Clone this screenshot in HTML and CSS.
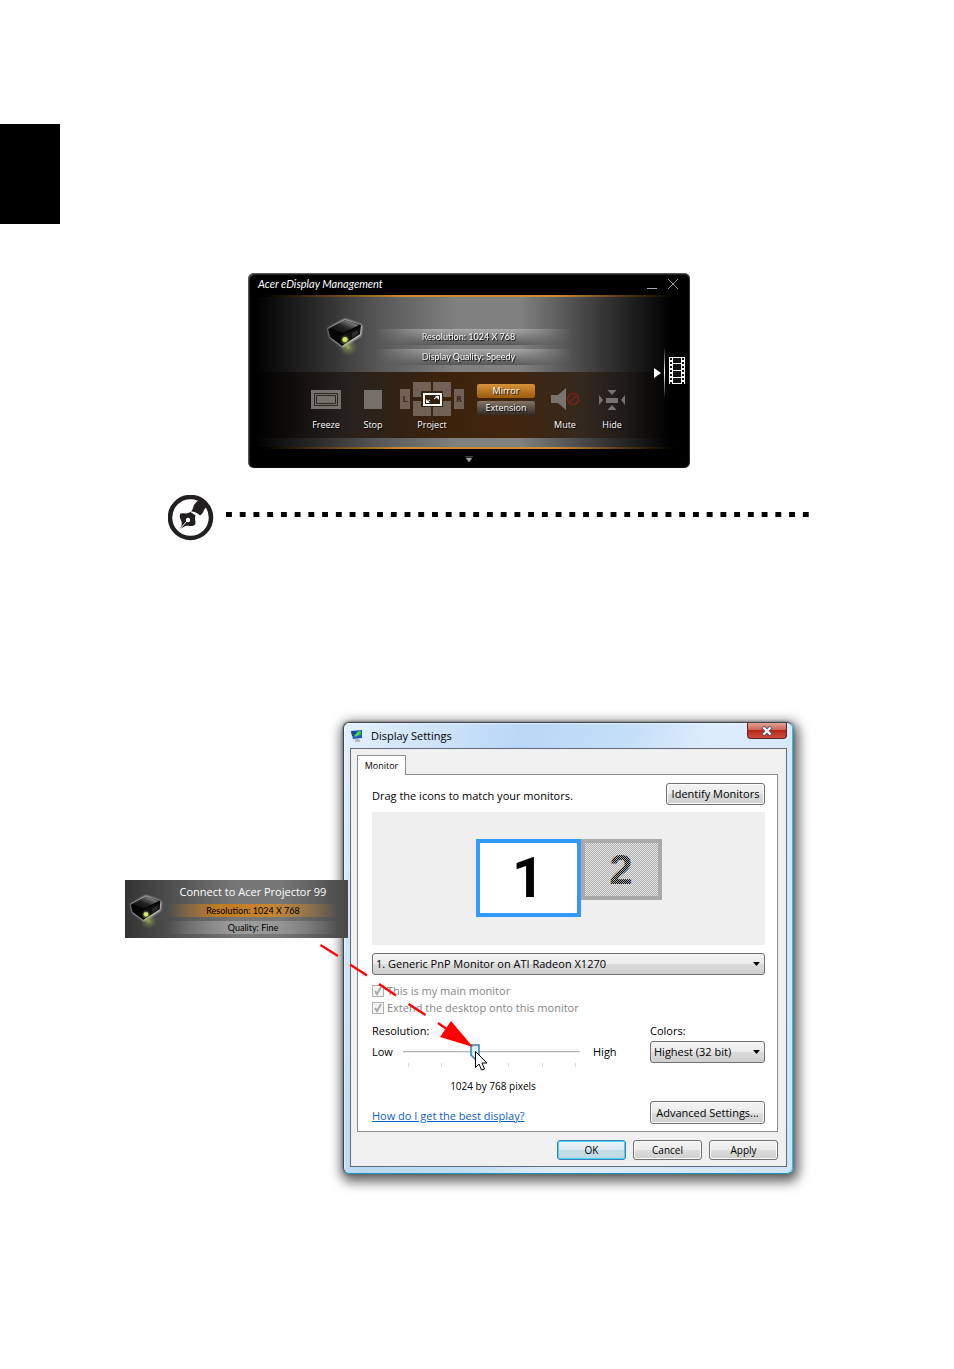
FILE: index.html
```
<!DOCTYPE html>
<html lang="en">
<head>
<meta charset="utf-8">
<title>Acer eDisplay Management</title>
<link rel="stylesheet" href="styles.css">
</head>
<body>
<svg class="defs" aria-hidden="true">
  <defs>
    <linearGradient id="lid" x1="0" y1="1" x2="1" y2="0"><stop offset="0" stop-color="#0a0a0a"/><stop offset=".45" stop-color="#222"/><stop offset="1" stop-color="#b5b5b5"/></linearGradient>
    <radialGradient id="beam"><stop offset="0" stop-color="#d8f070" stop-opacity=".95"/><stop offset=".4" stop-color="#a4c050" stop-opacity=".6"/><stop offset="1" stop-color="#a0b060" stop-opacity="0"/></radialGradient>
    <filter id="halo" x="-30%" y="-30%" width="160%" height="160%"><feGaussianBlur stdDeviation="1.3"/></filter>
  </defs>
  <symbol id="projector" viewBox="0 0 40 42">
    <path d="M4 14 20 5 36 11 35 20 18 31 6 22Z" fill="#fff" stroke="#fff" stroke-width="2" filter="url(#halo)" opacity=".85"/>
    <ellipse cx="23" cy="32" rx="9" ry="9" fill="url(#beam)" opacity=".6"/>
    <path d="M3 14 20 5 36 10 35 19 17 31 5 22Z" fill="#050505"/>
    <path d="M5 13 20 5 34 10 18 18Z" fill="url(#lid)"/>
    <path d="M17 20 35 12 35 19 17 30Z" fill="#111"/>
    <path d="M27 18l6-3v4l-6 4z" fill="#2c2c2c"/>
    <circle cx="20" cy="25" r="5" fill="url(#beam)"/>
    <circle cx="20" cy="24.500" r="2.500" fill="#d3e86a"/>
  </symbol>
</svg>

<div class="thumb-tab"></div>

<section class="manager" aria-label="Acer eDisplay Management">
  <header class="manager-title">
    <h1>Acer eDisplay Management</h1>
    <button class="win-btn" aria-label="Minimize"><svg width="12" height="12" viewBox="0 0 12 12"><path d="M1 10.500h10" stroke="#aaa"/></svg></button>
    <button class="win-btn" aria-label="Close"><svg width="12" height="12" viewBox="0 0 12 12"><path d="M1 1l10 10M11 1 1 11" stroke="#999"/></svg></button>
  </header>
  <div class="manager-body">
    <div class="manager-status">
      <svg class="projector" width="40" height="42" aria-hidden="true"><use href="#projector"/></svg>
      <div class="status-bars">
        <p>Resolution: 1024 X 768</p>
        <p>Display Quality: Speedy</p>
      </div>
    </div>
    <div class="controls">
      <button class="control">
        <svg width="30" height="20" viewBox="0 0 30 20"><path d="M0 0h30v19H0z" fill="#76706b"/><path d="M3.500 3.500h23v12h-23zM5.500 5.500h19v8h-19z" fill="none" stroke="#2a2623"/></svg>
        <span>Freeze</span>
      </button>
      <button class="control">
        <svg width="18" height="20" viewBox="0 0 18 20"><path d="M0 0h18v19H0z" fill="#76706b"/></svg>
        <span>Stop</span>
      </button>
      <button class="control control-project">
        <svg width="64" height="36" viewBox="0 0 64 36">
          <path d="M0 7h10v20H0zM54 7h10v20H54zM13 0h18v15H13zM33 0h18v15H33zM13 19h18v15H13zM33 19h18v15H33z" fill="#716157"/>
          <path d="M21 9h22v16H21z" fill="#3a210e"/>
          <path d="M24 12h17v11H24z" fill="#35200f" stroke="#fff" stroke-width="2"/>
          <path d="M35 14h4v4zM26 21v-4l4 4z" fill="#fff"/>
          <path d="m27 20 3-2M34 17l4-3" stroke="#fff"/>
          <text x="5" y="20" text-anchor="middle">L</text><text x="59" y="20" text-anchor="middle">R</text>
        </svg>
        <span>Project</span>
      </button>
      <div class="modes">
        <button class="mode mode-on">Mirror</button>
        <button class="mode">Extension</button>
      </div>
      <button class="control">
        <svg width="28" height="24" viewBox="0 0 28 24"><path d="M0 7h7L15 0v22l-8-7H0z" fill="#79726d"/><circle cx="22" cy="11" r="5.500" fill="none" stroke="#7a1f1c" stroke-width="1.500"/><path d="m18 15 8-8" stroke="#7a1f1c" stroke-width="1.500"/></svg>
        <span>Mute</span>
      </button>
      <button class="control">
        <svg width="26" height="20" viewBox="0 0 26 20"><path d="M8.500 0h9L13 5zM8.500 20h9L13 15zM0 5v10l4-5zM26 5v10l-4-5zM7 8h12v5H7z" fill="#79726d"/></svg>
        <span>Hide</span>
      </button>
    </div>
    <div class="manager-strip"></div>
  </div>
  <footer class="manager-foot"><svg width="8" height="6" viewBox="0 0 8 6"><path d="M0 .500h8M1 2h6L4 6z" fill="#aaa" stroke="#888" stroke-width=".5"/></svg></footer>
  <button class="side-tab" aria-label="Media">
    <svg width="34" height="54" viewBox="0 0 34 54">
      <defs><linearGradient id="rule" x1="0" y1="0" x2="0" y2="1"><stop offset="0" stop-color="#fff" stop-opacity="0"/><stop offset=".5" stop-color="#fff"/><stop offset="1" stop-color="#fff" stop-opacity="0"/></linearGradient></defs>
      <path d="M1 23v10l7-5z" fill="#fff"/>
      <path d="M11 2h1v51h-1z" fill="url(#rule)"/>
      <path d="M16 12h16v27H16z" fill="#fff"/>
      <path d="M20 13h8v5h-8zM20 19h8v6h-8zM20 26h8v6h-8zM20 33h8v5h-8z" fill="#111"/>
      <path d="M18 13v26M30 13v26" stroke="#111" stroke-width="2" stroke-dasharray="2 2"/>
    </svg>
  </button>
</section>

<div class="note">
  <svg width="46" height="46" viewBox="0 0 46 46" aria-hidden="true">
    <circle cx="22.500" cy="22.500" r="20.500" fill="#fff" stroke="#231f20" stroke-width="4.500"/>
    <path d="M23 16.500c2-2 2-4 3-6.500 2-3 4-5 7-6l5 2 3 5c-3 1-4 2-5 4-1 3-2 4-4 5.500-2-2-5-4-9-4z" fill="#231f20"/>
    <path d="M11 35c3-4 3-6 2.500-8.500C12.500 24 11 22 12 19.500c2-2.500 5 0 8-1.500l2.500-1 5 3.500c-1 3 0 5 0 8-1 3-4 2.500-6 2.500-4-1-6 1-10.500 4z" fill="#231f20"/>
    <path d="M11 35 19 26" stroke="#fff"/>
    <circle cx="20" cy="25" r="2.200" fill="#fff"/>
  </svg>
  <div class="dots"></div>
</div>

<section class="figure">
  <div class="dialog" role="dialog" aria-label="Display Settings">
    <header class="dialog-title">
      <svg width="14" height="14" viewBox="0 0 14 14" aria-hidden="true"><path d="M1 2 12 1v8L3 10z" fill="#2557c4"/><path d="M2 4c3-3 4 2 9-2v4c-3 2-4-1-7 2z" fill="#31b23a"/><path d="M1 2h5v5H2z" fill="#17489b"/><path d="m3 5 2 1 4-4 2 1-5 5z" fill="#56d846"/><path d="M5 10h4l2 3H5z" fill="#b4bac0"/></svg>
      <h2>Display Settings</h2>
      <button class="close" aria-label="Close"><svg width="12" height="10" viewBox="0 0 12 10"><path d="m2 1 8 8M10 1 2 9" stroke="#4f5666" stroke-width="4"/><path d="m2.500 1.500 7 7M9.500 1.500l-7 7" stroke="#fff" stroke-width="2.200"/></svg></button>
    </header>
    <div class="client">
      <button class="tab">Monitor</button>
      <div class="tab-page">
        <div class="row row-first">
          <span>Drag the icons to match your monitors.</span>
          <button class="btn btn-identify">Identify Monitors</button>
        </div>
        <div class="desk">
          <div class="screen screen-one">1</div>
          <div class="screen screen-two">2</div>
        </div>
        <select class="select" aria-label="Monitor"><option>1. Generic PnP Monitor on ATI Radeon X1270</option></select>
        <div class="checks">
          <label class="check"><input type="checkbox" checked disabled>This is my main monitor</label>
          <label class="check"><input type="checkbox" checked disabled>Extend the desktop onto this monitor</label>
        </div>
        <div class="settings">
          <div class="resolution">
            <label for="res">Resolution:</label>
            <div class="slider-row">
              <span>Low</span>
              <div class="slider"><input id="res" type="range" min="0" max="100" value="40"><div class="ticks"><i></i><i></i><i></i><i></i><i></i><i></i></div></div>
              <span>High</span>
            </div>
            <output class="res-value" for="res">1024 by 768 pixels</output>
          </div>
          <div class="colors">
            <label for="col">Colors:</label>
            <select id="col" class="select"><option>Highest (32 bit)</option></select>
          </div>
        </div>
        <div class="row row-last">
          <a href="#help">How do I get the best display?</a>
          <button class="btn btn-advanced">Advanced Settings...</button>
        </div>
      </div>
      <div class="actions">
        <button class="btn btn-default">OK</button>
        <button class="btn">Cancel</button>
        <button class="btn">Apply</button>
      </div>
    </div>
  </div>

  <aside class="callout">
    <svg class="callout-icon" width="36" height="38" aria-hidden="true"><use href="#projector"/></svg>
    <div class="callout-text">
      <h3>Connect to Acer Projector 99</h3>
      <p class="bar-orange">Resolution: 1024 X 768</p>
      <p class="bar-gray">Quality: Fine</p>
    </div>
  </aside>

  <svg class="arrow" width="180" height="140" viewBox="314 938 180 140" aria-hidden="true">
    <path d="M320.500 945 338 956M350 964.500l17 11M379 984l17 11.500M408.500 1004l17 11M438 1023l10 7" stroke="#f00" stroke-width="2.200"/>
    <path d="M473 1047 451 1021 440 1037z" fill="#f00"/>
    <path d="M475.500 1051.500v16l3.500-3.500 2.500 6 3-1-2.500-6h5z" fill="#fff" stroke="#000"/>
  </svg>
</section>
</body>
</html>
```
FILE: styles.css
```
* { box-sizing: border-box; }
body {
  margin: 0;
  padding: 124px 0 195px;
  background: #fff;
  font: 11px/16px "Open Sans", "Noto Sans", sans-serif;
  color: #000;
}
h1, h2, h3, p { margin: 0; font-weight: normal; }
button, select, input { font: inherit; color: inherit; margin: 0; }
button { padding: 0; border: 0; background: none; }
svg { display: block; flex: none; }
.defs { position: absolute; width: 0; height: 0; }

.thumb-tab { width: 60px; height: 100px; background: #000; }

/* Management window */
.manager {
  position: relative;
  margin: 49px 264px 0 248px;
  border-radius: 6px;
  background: #000;
  color: #fff;
  overflow: hidden;
  box-shadow: inset 1px 1px 2px #777, inset -1px 0 1px #333;
}
.manager-title {
  display: flex;
  align-items: center;
  gap: 9px;
  height: 22px;
  padding: 0 11px 0 10px;
}
.manager-title h1 { flex: 1; font: italic 11px/20px Lato, sans-serif; }
.manager-body {
  margin: 0 6px;
  border-block: 2px solid;
  border-image: linear-gradient(90deg, #000 3%, #d08a30 35%, #d08a30 70%, #000 97%) 2;
  background: linear-gradient(90deg, #000, #2e2e2e 16%, #555 28%, #808080 47%, #808080 62%, #333 82%, #000 97%);
}
.manager-status { display: flex; height: 75px; padding: 18px 112px 0 71px; }
.status-bars { flex: 1; display: grid; gap: 4px; align-content: start; padding-top: 14px; }
.status-bars p {
  height: 16px;
  text-align: center;
  font-family: Lato, sans-serif;
  font-size: 9px;
  text-shadow: 1px 1px 1px #000;
  background: linear-gradient(#aaa, #555);
  mask: linear-gradient(90deg, transparent 5%, #000 35%, #000 70%, transparent);
}
.controls {
  display: grid;
  grid-template-columns: 48fr 46fr 72fr 76fr 42fr 52fr;
  height: 66px;
  padding: 0 46px 0 48px;
  background: linear-gradient(90deg, #000, #27221e 22%, #3c220c 44%, #42250b 58%, #35291f 76%, #1e1b19 86%, #000 97%);
}
.control {
  display: grid;
  grid-template-rows: 36px 14px;
  place-items: center;
  align-content: start;
  padding-top: 10px;
}
.control span, .mode { font-family: "Open Sans", sans-serif; font-size: 9px; line-height: 14px; text-shadow: 1px 1px 1px #000; white-space: nowrap; }
.control text { font: bold 9px "Open Sans", sans-serif; fill: #3b2717; }
.modes { display: grid; gap: 3px; align-content: start; padding: 12px 9px 0; }
.mode { height: 14px; border-radius: 2px; background: linear-gradient(#837468, #352a22); }
.mode-on { background: linear-gradient(#d69339, #9c5c0d); }
.manager-strip { height: 9px; }
.manager-foot { display: flex; justify-content: center; align-items: center; height: 19px; }
.side-tab { position: absolute; right: 3px; top: 72px; }

/* Note rule */
.note { display: flex; gap: 12px; margin: 27px 145px 0 168px; height: 45px; }
.dots { flex: 1; height: 5px; margin-top: 17px; background: linear-gradient(90deg, #000 44%, transparent 44%) 0 0 / calc((100% + 8px) / 43) 100%; }

/* Display settings */
.figure { position: relative; margin: 182px 161px 0 343px; }
.dialog {
  padding: 0 5px 6px 6px;
  border: 1px solid #3b4650;
  border-right-color: #18c8f0;
  border-bottom-color: #1f94b8;
  border-radius: 6px;
  background: linear-gradient(110deg, #e4f0fc, #b9d7f6 30%, #c5dff8 48%, #ddecfc 60%, #cfe4fa);
  box-shadow: inset 1px 1px 0 #fff8, 0 0 3px #555, 2px 4px 12px 4px #0009;
}
.dialog-title { display: flex; align-items: center; gap: 7px; height: 25px; }
.dialog-title h2 { flex: 1; font-size: 11px; }
.close {
  display: grid;
  place-items: center;
  align-self: start;
  width: 40px;
  height: 16px;
  border: 1px solid #59252a;
  border-top: 0;
  border-radius: 0 0 4px 4px;
  background: linear-gradient(#e2a195, #cd6556 45%, #b82718 50%, #cc4d3e);
}
.client { border: 1px solid #636c78; background: #f0f0f0; padding: 6px 8px 6px 6px; }
.tab { display: block; position: relative; height: 20px; width: 49px; margin-bottom: -1px; border: 1px solid #8a8c94; border-bottom: 0; background: #fff; font-size: 9px; }
.tab-page { border: 1px solid #8a8c94; background: #fff; padding: 8px 12px 7px 14px; }
.row { display: flex; justify-content: space-between; }
.row-first { align-items: center; }
.row-first span { padding-top: 4px; }
.row-last { align-items: end; margin-top: 7px; }
.row-last a { color: #0a62c8; }
.btn {
  min-width: 69px;
  height: 21px;
  border: 1px solid #707070;
  border-radius: 3px;
  background: linear-gradient(#f3f3f3, #ebebeb 50%, #dcdcdc 50%, #cfcfcf);
  box-shadow: inset 0 0 0 1px #fcfcfc;
}
.btn-identify { width: 99px; height: 22px; }
.btn-advanced { width: 115px; height: 23px; }
.desk { display: flex; justify-content: center; align-items: flex-start; height: 133px; margin-top: 7px; padding-top: 27px; background: #efefef; }
.screen { display: grid; place-items: center; font-weight: bold; }
.screen-one { width: 105px; height: 78px; border: 4px solid #39f; background: #fff; font-family: Roboto, Arial, sans-serif; font-size: 56px; line-height: 70px; }
.screen-two { position: relative; width: 81px; height: 61px; border: 4px solid #aaa; background: #e8e8e8; font-family: "Liberation Sans", Arial, sans-serif; font-size: 42px; line-height: 53px; }
.screen-two::after { content: ""; position: absolute; inset: 0; background: conic-gradient(#aaa 25%, transparent 0 50%, #aaa 0 75%, transparent 0) 0 0 / 2px 2px; }
.select {
  display: block;
  width: 100%;
  height: 22px;
  padding: 0 18px 0 3px;
  appearance: none;
  border: 1px solid #707070;
  border-radius: 3px;
  background: url("data:image/svg+xml,%3Csvg xmlns='http://www.w3.org/2000/svg' width='7' height='4'%3E%3Cpath d='M0 0h7L3.500 4z'/%3E%3C/svg%3E") no-repeat right 4px center, linear-gradient(#f3f3f3, #ebebeb 50%, #dcdcdc 50%, #cfcfcf);
}
.desk + .select { margin-top: 8px; }
.checks { display: grid; gap: 1px; margin-top: 8px; color: #858585; }
.check { display: flex; align-items: center; gap: 3px; }
.check input {
  appearance: none;
  width: 12px;
  height: 12px;
  border: 1px solid #b1b1b1;
  background: #f4f4f4 url("data:image/svg+xml,%3Csvg xmlns='http://www.w3.org/2000/svg' width='10' height='10'%3E%3Cpath d='M2 5l2 3 4-7' fill='none' stroke='%23aaa' stroke-width='2'/%3E%3C/svg%3E") center no-repeat;
}
.settings { display: flex; justify-content: space-between; margin-top: 7px; }
.resolution { width: 246px; }
.slider-row { display: grid; grid-template-columns: 31px 1fr 38px; margin-top: 5px; }
.slider-row > :last-child { padding-left: 13px; }
.slider input { display: block; appearance: none; width: 100%; height: 16px; background: linear-gradient(#b4b8ba 50%, #e6eaea 50%) center / 100% 2px no-repeat; }
.slider input::-webkit-slider-thumb {
  appearance: none;
  width: 10px;
  height: 16px;
  background: url("data:image/svg+xml,%3Csvg xmlns='http://www.w3.org/2000/svg' width='10' height='16'%3E%3Cpath d='M1 1h8v10l-4 4-4-4z' fill='%23d5effb' stroke='%233583ad' stroke-width='1.500'/%3E%3C/svg%3E");
}
.ticks { display: flex; justify-content: space-between; padding: 3px 4px 0 5px; }
.ticks i { width: 1px; height: 4px; background: #ddd; }
.res-value { display: block; margin-top: 11px; padding-right: 4px; text-align: center; font-size: 10px; }
.colors { width: 115px; }
.colors .select { margin-top: 2px; }
.actions { display: flex; justify-content: flex-end; gap: 7px; margin-top: 8px; }
.actions .btn { height: 20px; font-size: 10px; }
.btn.btn-default { border-color: #3c7fb1; box-shadow: inset 0 0 0 1px #46d3fb; background: linear-gradient(#eaf3f7, #dcebf1 50%, #c4dde6 50%, #c0d8e2); }

/* Connection callout */
.callout {
  position: absolute;
  left: -218px;
  top: 158px;
  display: flex;
  width: 223px;
  height: 58px;
  padding: 4px 10px 4px 3px;
  gap: 4px;
  background: linear-gradient(90deg, #333, #777 50%, #777 70%, #484848);
}
.callout-icon { margin-top: 8px; }
.callout-text { flex: 1; text-align: center; }
.callout-text h3 { color: #fff; font-size: 11px; }
.callout-text p { height: 13px; margin-top: 4px; font: 9px/13px Lato, sans-serif; }
.bar-orange { background: linear-gradient(90deg, #5550, #c07c22 30%, #c8862e 60%, #5550); }
.bar-gray { background: linear-gradient(90deg, #6660, #9c9c9c 40%, #999 60%, #6660); }

.arrow { position: absolute; left: -29px; top: 216px; pointer-events: none; }
```
